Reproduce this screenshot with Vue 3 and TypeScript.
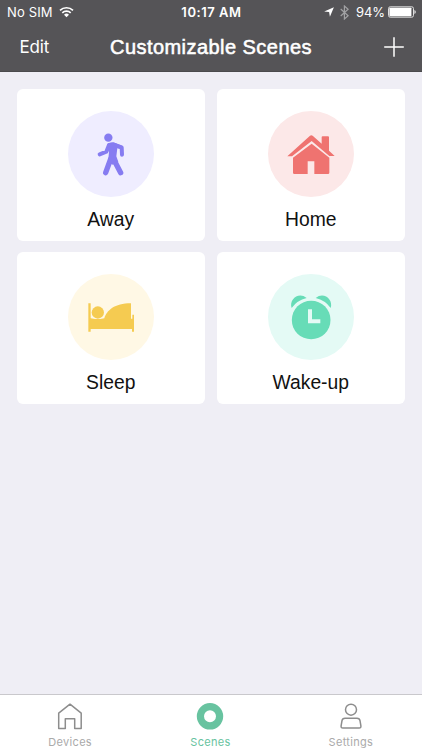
<script setup lang="ts">
type SceneIcon = 'away' | 'home' | 'sleep' | 'wake'
interface Scene { id: SceneIcon; name: string }

const scenes: Scene[] = [
  { id: 'away', name: 'Away' },
  { id: 'home', name: 'Home' },
  { id: 'sleep', name: 'Sleep' },
  { id: 'wake', name: 'Wake-up' },
]
</script>

<template>
  <div class="screen">
    <header class="header">
      <div class="status">
        <div class="status-left">
          <span class="carrier">No SIM</span>
          <svg class="wifi" width="15" height="12" viewBox="0 0 15 12" fill="none" stroke="#fff" stroke-width="1.7">
            <path d="M1 4.4a9.3 9.3 0 0 1 13 0M3.3 6.9a6 6 0 0 1 8.4 0" />
            <path d="M7.5 11.2 5 8.8a3.6 3.6 0 0 1 5 0Z" fill="#fff" stroke="none" />
          </svg>
        </div>
        <span class="time">10:17 AM</span>
        <div class="status-right">
          <svg width="10" height="10" viewBox="0 0 10 10" fill="#fff"><path d="M9.9.2 5.9 9.8 5.1 5.1.2 4.5Z" /></svg>
          <svg class="bluetooth" width="9" height="15" viewBox="0 0 9 15" fill="none" stroke="#a2a2a4" stroke-width="1.2"><path d="m.7 4 7.4 6.7-3.7 3.3V1l3.7 3.2L.7 11" /></svg>
          <span class="percent">94%</span>
          <svg class="battery" width="28" height="12" viewBox="0 0 28 12">
            <rect x=".5" y=".8" width="25" height="10.4" rx="1.7" fill="none" stroke="#ddd" />
            <rect x="1.4" y="1.7" width="22" height="8.6" rx=".6" fill="#fff" />
            <path d="M26.5 4q1.2.5 1.2 2t-1.2 2Z" fill="#fff" />
          </svg>
        </div>
      </div>
      <div class="nav">
        <span class="edit">Edit</span>
        <h1 class="title">Customizable Scenes</h1>
        <svg class="plus" width="20" height="20" viewBox="0 0 20 20" stroke="#fff" stroke-width="1.5"><path d="M10 .2v19.6M.2 10h19.6" /></svg>
      </div>
    </header>

    <main class="grid">
      <section v-for="scene in scenes" :key="scene.id" class="card">
        <svg class="scene-icon" :class="scene.id" width="86" height="86" viewBox="23 17 258 258">
          <circle class="disc" cx="152" cy="146" r="129" />
          <g v-if="scene.id === 'away'" fill="none" stroke="currentColor" stroke-linecap="round" stroke-linejoin="round">
            <circle cx="144" cy="97" r="12.5" fill="currentColor" stroke="none" />
            <path d="M146 119 138 139 118 147M160 118 184 126 185 148" stroke-width="12" />
            <path d="M151 161 136 202M161 164 181 202" stroke-width="16" />
            <path d="M141 117Q152 106 167 114L184 121 181 131 171 129 168 153 174 170 157 178 143 169 146 141Z" fill="currentColor" stroke="none" />
          </g>
          <g v-else-if="scene.id === 'home'" fill="currentColor">
            <path d="M81 153 149 91q4-3 8 0l27 24V96q0-3 3-3h16q3 0 3 3v40l17 16H207L154 107 95 153Z" />
            <path d="m154 115 53 42v45q0 4-4 4h-41v-38h-20v38H102q-4 0-4-4v-45Z" />
          </g>
          <g v-else-if="scene.id === 'sleep'" fill="currentColor">
            <path d="M84 105h7v45l13 2h16l12-2C139 127 162 105 212 105v46h4v-12h5v51h-6v-8H91v8h-7Z" />
            <circle cx="112.5" cy="132.5" r="18.5" />
          </g>
          <g v-else fill="currentColor">
            <path d="M94 119C85 94 115 68 139 89Q110 96 94 119ZM211 119C220 94 190 68 166 89Q195 96 211 119Z" />
            <circle cx="152.5" cy="155" r="58" />
            <path class="disc" d="M143 123h12v30h25v12h-37Z" />
          </g>
        </svg>
        <span class="scene-name">{{ scene.name }}</span>
      </section>
    </main>

    <footer class="tabs">
      <div class="tab">
        <svg width="26" height="28" viewBox="0 0 26 28" fill="none" stroke="#8d8d8d" stroke-width="1.5" stroke-linejoin="round"><path d="M1.7 10.2 13 1.2l11.2 9v15.3h-6.5V15.8H8.3v9.7H1.7Z" /></svg>
        <span>Devices</span>
      </div>
      <div class="tab active">
        <svg width="28" height="28" viewBox="0 0 28 28"><circle cx="14" cy="13.3" r="9.6" fill="none" stroke="#68c3a0" stroke-width="7.2" /></svg>
        <span>Scenes</span>
      </div>
      <div class="tab">
        <svg width="24" height="28" viewBox="0 0 24 28" fill="none" stroke="#8d8d8d" stroke-width="1.5"><circle cx="12" cy="6.7" r="5.5" /><path d="M6 15.2h12q2.6 0 3 2.4l.9 5.3q.3 2-1.8 2H3.9q-2.1 0-1.8-2L3 17.6q.4-2.4 3-2.4Z" /></svg>
        <span>Settings</span>
      </div>
    </footer>
  </div>
</template>

<style>
body { margin: 0; background: #efeef5; }
</style>

<style scoped>
.screen { width: 422px; height: 750px; display: flex; flex-direction: column; background: #efeef5; font-family: "Liberation Sans", sans-serif; overflow: hidden; }
.screen svg { display: block; flex-shrink: 0; }
.header { height: 72px; flex-shrink: 0; background: #555457; color: #fff; box-sizing: border-box; border-bottom: 1px solid #4b4a4d; }
.status { height: 24px; display: grid; grid-template-columns: 1fr auto 1fr; align-items: center; font: 13px/24px Inter, sans-serif; }
.status-left { display: flex; align-items: center; padding-left: 7px; gap: 6px; }
.carrier { letter-spacing: .15px; }
.time { font-weight: 600; font-size: 13px; letter-spacing: .55px; padding-left: 1px; }
.status-right { display: flex; align-items: center; justify-content: flex-end; padding-right: 6px; }
.bluetooth { margin-left: 6px; }
.percent { margin-left: 7px; letter-spacing: -.1px; }
.battery { margin-left: 3px; }
.nav { height: 46px; display: grid; grid-template-columns: 1fr auto 1fr; align-items: center; }
.edit { padding-left: 19.5px; font: 17px/24px Inter, sans-serif; letter-spacing: -.2px; }
.title { margin: 0; font-size: 20px; line-height: 24px; font-weight: 400; letter-spacing: .45px; -webkit-text-stroke: .55px #fff; white-space: nowrap; }
.plus { justify-self: end; margin-right: 18px; }
.grid { flex: 1; display: grid; grid-template-columns: 187.5px 187.5px; grid-auto-rows: 151.5px; column-gap: 12.5px; row-gap: 11.5px; align-content: start; padding: 17.3px 17px 0; }
.card { display: flex; flex-direction: column; align-items: center; background: #fff; border-radius: 6px; padding-top: 21.3px; box-sizing: border-box; }
.scene-icon .disc { fill: var(--disc); }
.away { --disc: #efedff; color: #867cf1; }
.home { --disc: #fce8e8; color: #ef7370; }
.sleep { --disc: #fff8e5; color: #f5cb51; }
.wake { --disc: #e4faf5; color: #67dcb7; }
.scene-name { margin-top: 11px; font-size: 19.3px; line-height: 24px; color: #111; }
.tabs { height: 56px; box-sizing: border-box; flex-shrink: 0; display: grid; grid-template-columns: repeat(3, 1fr); padding-right: 1px; background: #fff; border-top: 1px solid #c9c8cc; }
.tab { display: flex; flex-direction: column; align-items: center; padding-top: 7.5px; color: #aaa; font: 11px/13px Inter, sans-serif; letter-spacing: .3px; }
.tab span { margin-top: 5px; }
.tab.active { color: #68c3a0; }
</style>
